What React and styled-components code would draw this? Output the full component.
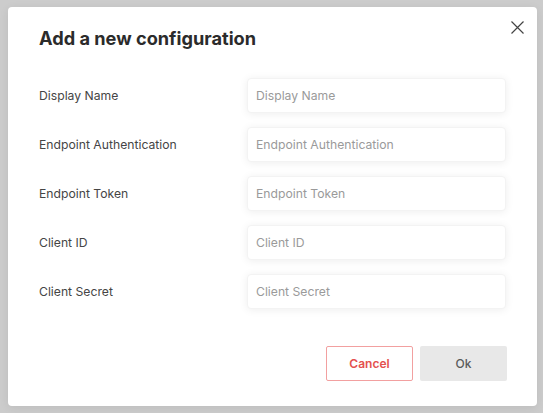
import React from "react";
import styled, { createGlobalStyle } from "styled-components";

const GlobalStyle = createGlobalStyle`
  body {
    margin: 0;
    background: #cccccc;
    font-family: Inter, "Noto Sans", sans-serif;
  }
`;

const fields = [
  "Display Name",
  "Endpoint Authentication",
  "Endpoint Token",
  "Client ID",
  "Client Secret",
];

export default function App() {
  return (
    <Page>
      <GlobalStyle />
      <Modal>
        <CloseButton aria-label="close">
          <svg width="13" height="13" viewBox="0 0 13 13">
            <path d="M0.5 0.5L12.5 12.5M12.5 0.5L0.5 12.5" stroke="#444" strokeWidth="1.2" />
          </svg>
        </CloseButton>
        <Title>Add a new configuration</Title>
        <Form>
          {fields.map((f) => (
            <Row key={f}>
              <Label>{f}</Label>
              <Input placeholder={f} />
            </Row>
          ))}
        </Form>
        <Footer>
          <Button variant="cancel">Cancel</Button>
          <Button>Ok</Button>
        </Footer>
      </Modal>
    </Page>
  );
}

const Page = styled.div`
  width: 543px;
  height: 413px;
  padding: 7px 0 0 8px;
  box-sizing: border-box;
`;

const Modal = styled.div`
  position: relative;
  width: 529px;
  height: 399px;
  box-sizing: border-box;
  background: #ffffff;
  border-radius: 4px;
  box-shadow: 0 2px 10px rgba(0, 0, 0, 0.08);
  padding: 20px 31px 25px 31px;
  display: flex;
  flex-direction: column;
`;

const CloseButton = styled.button`
  position: absolute;
  top: 11px;
  right: 11px;
  width: 18px;
  height: 18px;
  padding: 0;
  border: none;
  background: none;
  display: flex;
  align-items: center;
  justify-content: center;
  cursor: pointer;
`;

const Title = styled.h2`
  margin: 0;
  font-size: 18.2px;
  line-height: 22px;
  font-weight: 700;
  color: #2b2b2b;
`;

const Form = styled.div`
  margin-top: 29px;
  display: flex;
  flex-direction: column;
  gap: 14px;
`;

const Row = styled.div`
  display: flex;
  align-items: center;
  justify-content: space-between;
`;

const Label = styled.label`
  font-size: 12.2px;
  color: #454545;
`;

const Input = styled.input`
  width: 259px;
  height: 35px;
  box-sizing: border-box;
  border: 1px solid #f3f3f3;
  border-radius: 4px;
  padding: 0 8px;
  font-family: Inter, "Noto Sans", sans-serif;
  font-size: 12.2px;
  color: #333;
  background: #fff;
  box-shadow: 0 1px 8px rgba(0, 0, 0, 0.07);
  outline: none;
  &::placeholder {
    color: #9a9a9a;
  }
`;

const Footer = styled.div`
  margin-top: auto;
  margin-right: -1px;
  display: flex;
  justify-content: flex-end;
  gap: 7px;
`;

const Button = styled.button`
  width: 87px;
  height: 35px;
  box-sizing: border-box;
  border-radius: 2px;
  font-family: Inter, "Noto Sans", sans-serif;
  font-size: 12px;
  cursor: pointer;
  border: ${(p) => (p.variant === "cancel" ? "1px solid #f2a0a0" : "none")};
  background: ${(p) => (p.variant === "cancel" ? "#fff" : "#e8e8e8")};
  color: ${(p) => (p.variant === "cancel" ? "#e4514e" : "#5a5a5a")};
  font-weight: ${(p) => (p.variant === "cancel" ? 600 : 500)};
`;
